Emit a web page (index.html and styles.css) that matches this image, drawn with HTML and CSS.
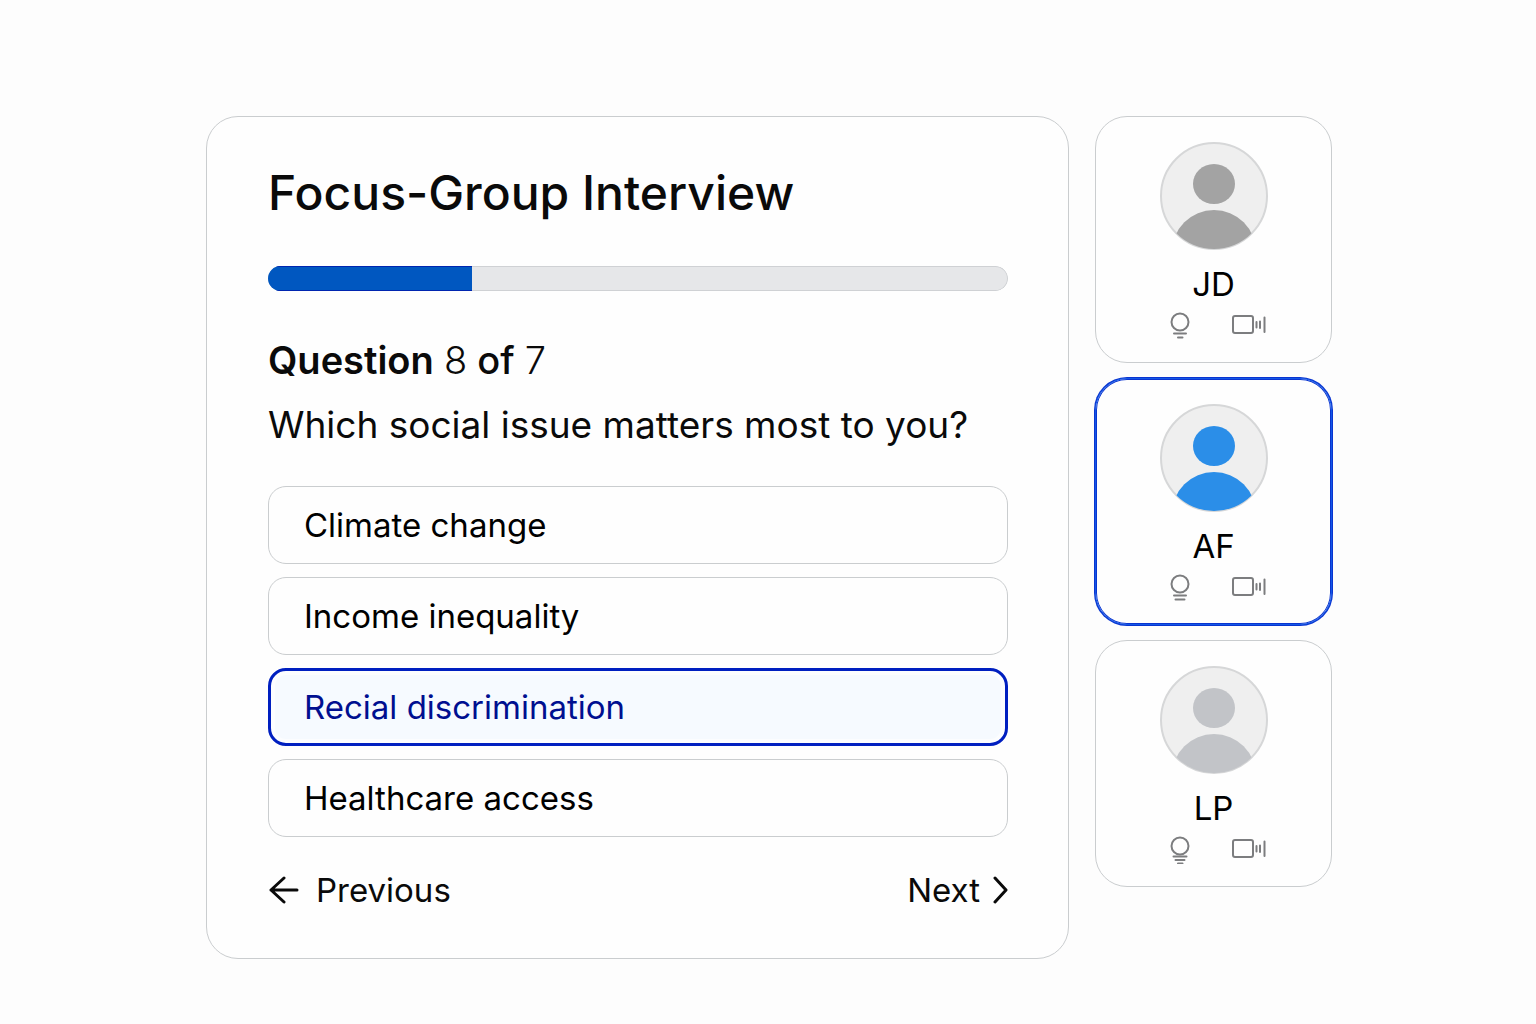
FILE: index.html
```html
<!DOCTYPE html>
<html lang="en">
<head>
<meta charset="utf-8">
<meta name="viewport" content="width=device-width, initial-scale=1">
<title>Focus-Group Interview</title>
<link rel="stylesheet" href="styles.css">
</head>
<body>
<svg class="sprite" aria-hidden="true">
  <symbol id="person" viewBox="0 0 108 108">
    <clipPath id="disc"><circle cx="54" cy="54" r="53"/></clipPath>
    <circle class="disc" cx="54" cy="54" r="53"/>
    <g fill="currentColor" clip-path="url(#disc)">
      <ellipse cx="54" cy="42" rx="21" ry="20"/>
      <circle cx="54" cy="110" r="42"/>
    </g>
  </symbol>
  <symbol id="camera" viewBox="0 0 34 28">
    <rect x="1" y="4" width="20" height="17" rx="2"/>
    <path d="M24.500 10v5.500M28 9.500v6.500M32.500 5.500v14.500"/>
  </symbol>
</svg>
<div class="page">
  <main class="card interview">
    <h1 class="title">Focus-Group Interview</h1>
    <progress class="progress" value="204" max="740" aria-label="Interview progress"></progress>
    <form class="form">
      <p class="counter"><strong>Question</strong> <span class="number">8</span> of <span class="number">7</span></p>
      <fieldset class="choices">
        <legend class="question">Which social issue matters most to you?</legend>
        <div class="options">
          <label class="option"><input type="radio" name="issue" value="climate">Climate change</label>
          <label class="option"><input type="radio" name="issue" value="income">Income inequality</label>
          <label class="option"><input type="radio" name="issue" value="discrimination" checked>Recial discrimination</label>
          <label class="option"><input type="radio" name="issue" value="healthcare">Healthcare access</label>
        </div>
      </fieldset>
      <div class="nav">
        <button class="nav-button" type="button">
          <svg class="arrow" viewBox="0 0 32 28" aria-hidden="true"><path d="M29 14H3M16 2L3 14l13 12"/></svg>
          Previous
        </button>
        <button class="nav-button next" type="button">
          Next
          <svg class="chevron" viewBox="0 0 16 28" aria-hidden="true"><path d="M3 2l11 12L3 26"/></svg>
        </button>
      </div>
    </form>
  </main>
  <aside class="participants" aria-label="Participants">
    <section class="card participant">
      <svg class="avatar gray" aria-hidden="true"><use href="#person"/></svg>
      <h2 class="initials">JD</h2>
      <div class="status">
        <svg class="bulb" viewBox="0 0 20 28" aria-hidden="true"><circle cx="10" cy="10" r="8.500"/><path d="M4 21.500h12M8 25.500h4.500"/></svg>
        <svg class="camera" aria-hidden="true"><use href="#camera"/></svg>
      </div>
    </section>
    <section class="card participant active">
      <svg class="avatar blue" aria-hidden="true"><use href="#person"/></svg>
      <h2 class="initials">AF</h2>
      <div class="status">
        <svg class="bulb" viewBox="0 0 20 28" aria-hidden="true"><circle cx="10" cy="10" r="8.500"/><path d="M4 21.500h12M5.500 25.500h9"/></svg>
        <svg class="camera" aria-hidden="true"><use href="#camera"/></svg>
      </div>
    </section>
    <section class="card participant">
      <svg class="avatar silver" aria-hidden="true"><use href="#person"/></svg>
      <h2 class="initials">LP</h2>
      <div class="status">
        <svg class="bulb" viewBox="0 0 20 28" aria-hidden="true"><circle cx="10" cy="10" r="8.500"/><path d="M3.500 20.500h13M5.500 24h9M8 27.500h4.500"/></svg>
        <svg class="camera" aria-hidden="true"><use href="#camera"/></svg>
      </div>
    </section>
  </aside>
</div>
</body>
</html>
```

FILE: styles.css
```css
* {
  box-sizing: border-box;
}

body {
  margin: 0;
  background: #fdfdfd;
  color: #0a0a0a;
  font-family: Inter, "Liberation Sans", sans-serif;
  font-size: 33px;
  line-height: 42px;
}

h1, h2, p {
  margin: 0;
}

.sprite {
  display: block;
  width: 0;
  height: 0;
}

.page {
  display: grid;
  grid-template-columns: minmax(0, 1fr) 237px;
  align-items: start;
  gap: 26px;
  max-width: 1128px;
  margin: 0 auto;
  padding: 116px 0 64px 2px;
}

.card {
  background: #fefefe;
  border: 1px solid #cacdcf;
  border-radius: 32px;
}

.interview {
  padding: 45px 60px 47px 61px;
}

.title {
  font-size: 48px;
  line-height: 62px;
  font-weight: 500;
}

.progress {
  display: block;
  appearance: none;
  width: 100%;
  height: 25px;
  margin: 42px 0 46px;
  border: none;
  border-radius: 13px;
  overflow: hidden;
}

.progress::-webkit-progress-bar {
  background: #e6e7e9;
  border-radius: 13px;
  box-shadow: inset 0 0 0 1px #cfd1d4;
}

.progress::-webkit-progress-value {
  background: #0057c0;
  box-shadow: inset 0 1px #0026b0, inset 0 -1px #0026b0;
}

.counter,
.question {
  line-height: 46px;
}

.counter {
  margin-bottom: 19px;
  font-size: 38px;
  font-weight: 500;
}

.counter strong {
  font-weight: 600;
}

.number {
  font-weight: 300;
}

.choices {
  min-width: 0;
  margin: 0;
  padding: 0;
  border: none;
}

.question {
  padding: 0;
  font-size: 37px;
}

.options {
  display: grid;
  gap: 13px;
  margin-top: 38px;
}

.option {
  display: flex;
  align-items: center;
  min-height: 78px;
  padding: 0 35px;
  border: 1px solid #cacdcf;
  border-radius: 18px;
  color: #000;
  cursor: pointer;
}

.option input {
  appearance: none;
  width: 0;
  height: 0;
  margin: 0;
}

.option:has(:checked) {
  padding: 0 33px;
  border: 3px solid #001fc0;
  background: #f6faff;
  box-shadow: inset 0 0 0 4px #fcfdff;
  color: #000f90;
}

.nav {
  display: flex;
  justify-content: space-between;
  margin-top: 32px;
}

.nav-button {
  display: flex;
  align-items: center;
  gap: 16px;
  padding: 0;
  border: none;
  background: none;
  color: inherit;
  font: inherit;
  cursor: pointer;
}

.nav-button.next {
  gap: 12px;
}

.arrow,
.chevron {
  height: 28px;
  fill: none;
  stroke: currentColor;
  stroke-width: 3;
  stroke-linecap: round;
  stroke-linejoin: round;
}

.arrow {
  width: 32px;
}

.chevron {
  width: 16px;
}

.participants {
  display: grid;
  gap: 15px;
}

.participant {
  display: flex;
  flex-direction: column;
  align-items: center;
  padding: 25px 0 22px;
}

.participant.active {
  border-color: #1258e6;
  box-shadow: 0 0 0 1px #0a34d0, inset 0 0 0 1px #0a34d0;
}

.avatar {
  width: 108px;
  height: 108px;
}

.disc {
  fill: #efefef;
  stroke: #d6d7d8;
  stroke-width: 2;
}

.gray {
  color: #a3a3a3;
}

.blue {
  color: #2b8ee8;
}

.silver {
  color: #c2c4c8;
}

.initials {
  margin: 13px 0 7px;
  color: #000;
  font-size: 33px;
  line-height: 42px;
  font-weight: 400;
}

.status {
  display: flex;
  gap: 42px;
  padding-left: 8px;
}

.bulb,
.camera {
  height: 28px;
  fill: none;
  stroke: #7c7d7f;
  stroke-width: 2;
  stroke-linecap: round;
}

.bulb {
  width: 20px;
}

.camera {
  width: 34px;
}
```
